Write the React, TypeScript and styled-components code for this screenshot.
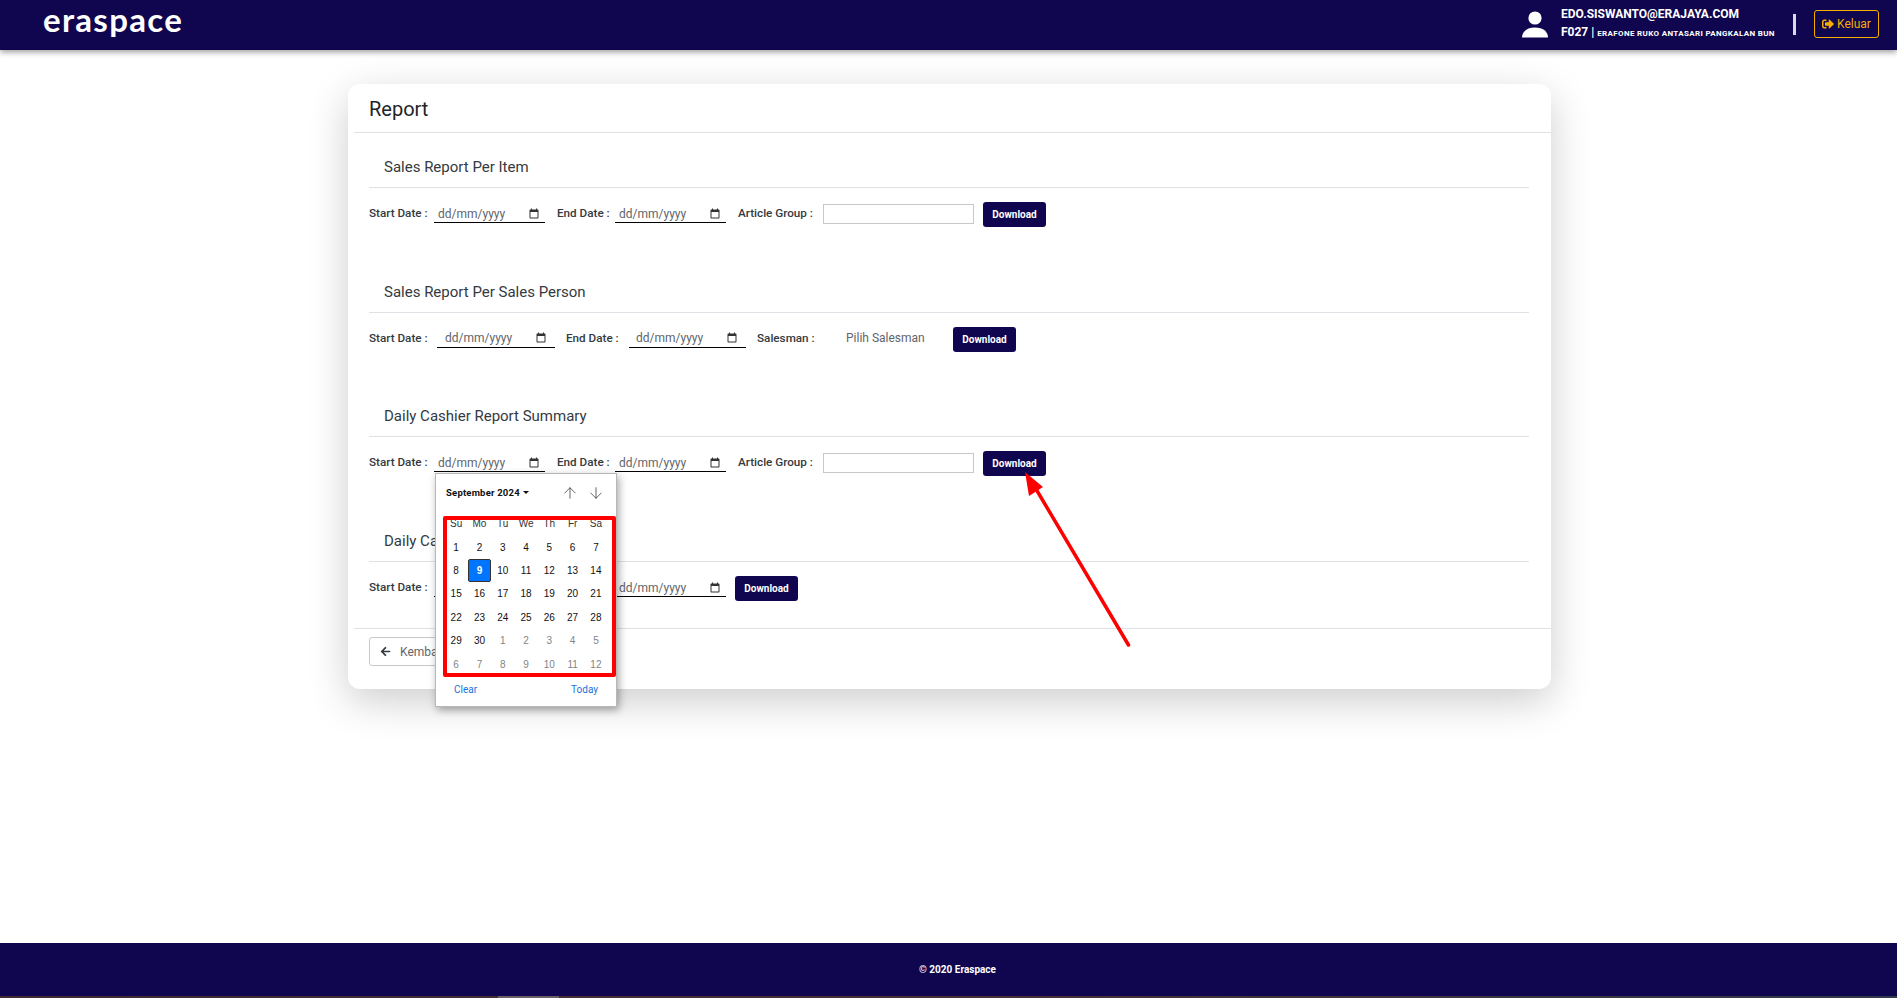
import React from "react";
import styled, { createGlobalStyle } from "styled-components";
import { FaArrowLeft, FaSignOutAlt } from "react-icons/fa";
import { ArrowUp, ArrowDown } from "lucide-react";

const navy = "#10064f";

const Global = createGlobalStyle`
  html, body { margin: 0; padding: 0; background: #fff; }
  body { font-family: Roboto, "Liberation Sans", sans-serif; color: #212529; }
  * { box-sizing: border-box; }
`;

const Page = styled.div`
  position: relative;
  width: 1897px;
  height: 998px;
  display: flex;
  flex-direction: column;
  overflow: hidden;
`;

const TopBar = styled.header`
  height: 50px;
  flex: none;
  background: ${navy};
  box-shadow: 0 2px 6px rgba(0, 0, 0, 0.4);
  display: flex;
  align-items: center;
  justify-content: space-between;
  padding: 0 18px 2px 43px;
  position: relative;
  z-index: 2;
`;

const Logo = styled.div`
  font-family: Lato, sans-serif;
  font-weight: 700;
  font-size: 33px;
  line-height: 40px;
  letter-spacing: 1.3px;
  color: #fff;
  margin-top: -10px;
`;

const UserArea = styled.div`
  display: flex;
  align-items: center;
`;

const UserInfo = styled.div`
  margin-left: 12px;
  width: 232px;
  color: #fff;
  font-weight: 700;
`;

const Email = styled.div`
  font-size: 12px;
  line-height: 14px;
  margin-bottom: 4px;
`;

const Store = styled.div`
  font-size: 12px;
  line-height: 14px;
  white-space: nowrap;
`;

const StoreName = styled.span`
  font-size: 8px;
  letter-spacing: 0.35px;
`;

const Divider = styled.div`
  width: 3px;
  height: 21px;
  background: #d9d9e8;
`;

const LogoutButton = styled.button`
  margin-left: 18px;
  width: 65px;
  height: 28px;
  border: 1px solid #f5ad00;
  border-radius: 3px;
  background: transparent;
  color: #f5ad00;
  font-family: inherit;
  font-size: 12px;
  display: flex;
  align-items: center;
  justify-content: center;
  gap: 3px;
  padding: 0 0 1px;
`;

const Main = styled.main`
  flex: 1;
  padding: 34px 346px 0 348px;
`;

const Card = styled.section`
  height: 605px;
  background: #fff;
  border-radius: 12px;
  box-shadow: 0 12px 40px rgba(0, 0, 0, 0.2);
  padding: 0 0 0 6px;
  display: flex;
  flex-direction: column;
`;

const CardHead = styled.div`
  height: 49px;
  flex: none;
  border-bottom: 1px solid #dee2e6;
  padding: 3px 0 0 15px;
  font-size: 20px;
  line-height: 45px;
  color: #212529;
`;

const CardBody = styled.div`
  height: 495px;
  flex: none;
  padding: 15px 22px 0 15px;
`;

const ReportSection = styled.div`
  height: 124.7px;
`;

const SectionTitle = styled.h3`
  margin: 0;
  height: 40px;
  padding: 0 0 2px 15px;
  border-bottom: 1px solid #dee2e6;
  font-size: 15px;
  font-weight: 400;
  line-height: 38px;
  color: #343a40;
`;

const FormRow = styled.div`
  display: flex;
  align-items: flex-start;
  padding-top: 14px;
  height: 60px;
`;

const FieldLabel = styled.label<{ $w: number }>`
  width: ${(p) => p.$w}px;
  flex: none;
  font-size: 11.7px;
  font-weight: 500;
  line-height: 20px;
  color: #343a40;
  white-space: nowrap;
  padding-top: 1px;
`;

const DateBox = styled.div<{ $w: number; $pad: number; $gap: number; $end: number }>`
  width: ${(p) => p.$w}px;
  margin-right: ${(p) => p.$gap}px;
  flex: none;
  height: 16px;
  margin-top: 5px;
  border-bottom: 1px solid #000;
  display: flex;
  align-items: center;
  justify-content: space-between;
  padding: 0 ${(p) => p.$end}px 2px ${(p) => p.$pad}px;
  font-size: 12px;
  color: #5f656b;
`;

const TextBox = styled.input`
  width: 151px;
  height: 20px;
  flex: none;
  margin: 2px 9px 0 0;
  padding: 0 4px;
  border: 1px solid #c8c8c8;
  background: #fff;
  outline: none;
`;

const SelectText = styled.div`
  width: 107px;
  flex: none;
  font-size: 12px;
  line-height: 20px;
  padding-top: 1px;
  color: #5f656b;
`;

const DownloadButton = styled.button`
  width: 63px;
  height: 25px;
  flex: none;
  border: none;
  border-radius: 3px;
  background: ${navy};
  color: #fff;
  font-family: inherit;
  font-size: 10px;
  font-weight: 700;
  padding: 0;
`;

const CardFoot = styled.div`
  flex: none;
  height: 61px;
  border-top: 1px solid #dee2e6;
  padding: 8px 0 0 15px;
`;

const BackButton = styled.button`
  width: 110px;
  height: 29px;
  border: 1px solid #c8c8c8;
  border-radius: 3px;
  background: #fff;
  color: #5f656b;
  font-family: inherit;
  font-size: 12px;
  display: flex;
  align-items: center;
  gap: 9px;
  padding: 0 0 0 10px;
`;

const BackIcon = styled(FaArrowLeft)`
  color: #343a40;
  width: 11px;
  height: 11px;
`;

const Footer = styled.footer`
  height: 53px;
  flex: none;
  background: ${navy};
  color: #fff;
  font-size: 10px;
  font-weight: 700;
  display: flex;
  align-items: center;
  justify-content: center;
  padding-left: 18px;
`;

const BottomStrip = styled.div`
  height: 2px;
  flex: none;
  display: flex;
  background: linear-gradient(90deg, #3d2a35 0%, #4a3034 50%, #333b4a 100%);
`;

const StripGap = styled.div`
  width: 498px;
`;

const StripTab = styled.div`
  width: 61px;
  background: #6a6068;
`;

const Picker = styled.div`
  position: absolute;
  left: 435px;
  top: 473px;
  width: 182px;
  height: 234px;
  background: #fff;
  border: 1px solid #b8b8b8;
  box-shadow: 2px 3px 8px rgba(0, 0, 0, 0.35);
  z-index: 3;
  display: flex;
  flex-direction: column;
  padding: 0 7px;
  font-family: "Liberation Sans", sans-serif;
`;

const PickerHead = styled.div`
  height: 39px;
  flex: none;
  display: flex;
  align-items: center;
  padding: 0 3px 2px;
  color: #111;
`;

const MonthName = styled.div`
  font-family: Roboto, sans-serif;
  font-size: 9.5px;
  font-weight: 700;
  letter-spacing: 0.2px;
`;

const Caret = styled.span`
  display: inline-block;
  margin-left: 3px;
  vertical-align: 2px;
  border-left: 3px solid transparent;
  border-right: 3px solid transparent;
  border-top: 3px solid #111;
`;

const ArrowPair = styled.div`
  margin-left: auto;
  margin-right: 1px;
  display: flex;
  gap: 8px;
  color: #333;
`;

const DayGrid = styled.div`
  margin-top: -1px;
  display: grid;
  grid-template-columns: repeat(7, 23.3px);
  grid-auto-rows: 23.4px;
  justify-content: start;
  padding-left: 1.5px;
`;

const DayCell = styled.div<{ $kind: "head" | "day" | "off" | "on" }>`
  display: flex;
  align-items: center;
  justify-content: center;
  font-size: 10px;
  border-radius: ${(p) => (p.$kind === "on" ? "2px" : "0")};
  font-weight: ${(p) => (p.$kind === "on" ? 700 : 400)};
  color: ${(p) =>
    p.$kind === "on" ? "#fff" : p.$kind === "off" ? "#80858a" : p.$kind === "head" ? "#333" : "#111"};
  background: ${(p) => (p.$kind === "on" ? "#0075ff" : "transparent")};
  border: ${(p) => (p.$kind === "on" ? "1px solid #333" : "none")};
`;

const PickerFoot = styled.div`
  display: flex;
  justify-content: space-between;
  padding: 8px 11px 0 11px;
  font-family: Roboto, sans-serif;
  font-size: 10px;
  color: #1a73d8;
`;

const RedFrame = styled.div`
  position: absolute;
  left: 443px;
  top: 516px;
  width: 173px;
  height: 161px;
  border: 4px solid #ff0000;
  border-radius: 2px;
  z-index: 4;
  pointer-events: none;
`;

const Annotation = styled.svg`
  position: absolute;
  left: 1000px;
  top: 460px;
  z-index: 4;
  pointer-events: none;
`;

const CalendarIcon = () => (
  <svg width="12" height="12" viewBox="0 0 24 24" fill="#333">
    <path d="M6 1h2v2h8V1h2v2h1c1.1 0 2 .9 2 2v14c0 1.1-.9 2-2 2H5c-1.1 0-2-.9-2-2V5c0-1.1.9-2 2-2h1V1zM5 8v11h14V8H5z" />
  </svg>
);

const UserIcon = () => (
  <svg width="28" height="27" viewBox="0 0 28 27" fill="#fff">
    <circle cx="14" cy="7" r="6.6" />
    <path d="M1 26.500c0-6 5-10 13-10s13 4 13 10z" />
  </svg>
);

const DateField = ({ w, pad, gap, end = 5 }: { w: number; pad: number; gap: number; end?: number }) => (
  <DateBox $w={w} $pad={pad} $gap={gap} $end={end}>
    <span>dd/mm/yyyy</span>
    <CalendarIcon />
  </DateBox>
);

type DayKind = "day" | "off" | "on";
const days: [string, DayKind][] = [
  ...Array.from({ length: 30 }, (_, i): [string, DayKind] => [String(i + 1), i === 8 ? "on" : "day"]),
  ...Array.from({ length: 12 }, (_, i): [string, DayKind] => [String(i + 1), "off"]),
];
const heads = ["Su", "Mo", "Tu", "We", "Th", "Fr", "Sa"];

export default function App() {
  return (
    <Page>
      <Global />
      <TopBar>
        <Logo>eraspace</Logo>
        <UserArea>
          <UserIcon />
          <UserInfo>
            <Email>EDO.SISWANTO@ERAJAYA.COM</Email>
            <Store>
              F027 | <StoreName>ERAFONE RUKO ANTASARI PANGKALAN BUN</StoreName>
            </Store>
          </UserInfo>
          <Divider />
          <LogoutButton>
            <FaSignOutAlt size={12} />
            Keluar
          </LogoutButton>
        </UserArea>
      </TopBar>
      <Main>
        <Card>
          <CardHead>Report</CardHead>
          <CardBody>
            <ReportSection>
              <SectionTitle>Sales Report Per Item</SectionTitle>
              <FormRow>
                <FieldLabel $w={65}>Start Date :</FieldLabel>
                <DateField w={111} pad={4} gap={12} />
                <FieldLabel $w={58}>End Date :</FieldLabel>
                <DateField w={111} pad={4} gap={12} />
                <FieldLabel $w={85}>Article Group :</FieldLabel>
                <TextBox />
                <DownloadButton>Download</DownloadButton>
              </FormRow>
            </ReportSection>
            <ReportSection>
              <SectionTitle>Sales Report Per Sales Person</SectionTitle>
              <FormRow>
                <FieldLabel $w={68}>Start Date :</FieldLabel>
                <DateField w={118} pad={8} gap={11} end={8} />
                <FieldLabel $w={63}>End Date :</FieldLabel>
                <DateField w={117} pad={7} gap={11} end={8} />
                <FieldLabel $w={89}>Salesman :</FieldLabel>
                <SelectText>Pilih Salesman</SelectText>
                <DownloadButton>Download</DownloadButton>
              </FormRow>
            </ReportSection>
            <ReportSection>
              <SectionTitle>Daily Cashier Report Summary</SectionTitle>
              <FormRow>
                <FieldLabel $w={65}>Start Date :</FieldLabel>
                <DateField w={111} pad={4} gap={12} />
                <FieldLabel $w={58}>End Date :</FieldLabel>
                <DateField w={111} pad={4} gap={12} />
                <FieldLabel $w={85}>Article Group :</FieldLabel>
                <TextBox />
                <DownloadButton>Download</DownloadButton>
              </FormRow>
            </ReportSection>
            <ReportSection>
              <SectionTitle>Daily Cashier Report Detail</SectionTitle>
              <FormRow>
                <FieldLabel $w={65}>Start Date :</FieldLabel>
                <DateField w={111} pad={4} gap={12} />
                <FieldLabel $w={58}>End Date :</FieldLabel>
                <DateField w={111} pad={4} gap={9} />
                <DownloadButton>Download</DownloadButton>
              </FormRow>
            </ReportSection>
          </CardBody>
          <CardFoot>
            <BackButton>
              <BackIcon />
              Kembali
            </BackButton>
          </CardFoot>
        </Card>
      </Main>
      <Footer>© 2020 Eraspace</Footer>
      <BottomStrip>
        <StripGap />
        <StripTab />
      </BottomStrip>

      <Picker>
        <PickerHead>
          <MonthName>
            September 2024
            <Caret />
          </MonthName>
          <ArrowPair>
            <ArrowUp size={18} strokeWidth={1} />
            <ArrowDown size={18} strokeWidth={1} />
          </ArrowPair>
        </PickerHead>
        <DayGrid>
          {heads.map((h) => (
            <DayCell key={h} $kind="head">
              {h}
            </DayCell>
          ))}
          {days.map(([d, k], i) => (
            <DayCell key={i} $kind={k}>
              {d}
            </DayCell>
          ))}
        </DayGrid>
        <PickerFoot>
          <span>Clear</span>
          <span>Today</span>
        </PickerFoot>
      </Picker>
      <RedFrame />
      <Annotation width="140" height="195" viewBox="0 0 140 195">
        <line x1="128.500" y1="185" x2="33" y2="24" stroke="#ff0000" strokeWidth="3.500" strokeLinecap="round" />
        <polygon points="25,12 43,27 29,36" fill="#ff0000" />
      </Annotation>
    </Page>
  );
}
